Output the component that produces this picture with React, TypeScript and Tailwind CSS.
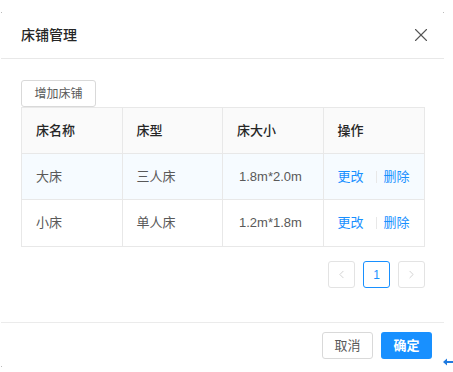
import { ChevronLeft, ChevronRight, X } from "lucide-react";

const rows = [
  { name: "大床", type: "三人床", size: "1.8m*2.0m", highlight: true },
  { name: "小床", type: "单人床", size: "1.2m*1.8m", highlight: false },
];

const cell = "w-[101px] pl-[14px] border-r border-[#e8e8e8] last:border-r-0 flex items-center";

export default function App() {
  return (
    <div className="relative h-[372px] w-[453px] bg-white font-['Liberation_Sans','Noto_Sans_CJK_SC',sans-serif] text-[13px] text-[#595959]">
      <div className="absolute left-[1px] top-[12px] h-px w-px bg-[#bbb]" />
      <div className="absolute left-[443px] top-[12px] h-px w-px bg-[#bbb]" />
      <div className="absolute left-[1px] top-[366px] h-px w-px bg-[#bbb]" />

      <div className="ml-[1px] w-[443px] pt-[12px]">
        <div className="flex h-[47px] items-center justify-between border-b border-[#e8e8e8] pl-[20px] pr-[12px]">
          <span className="text-[14px] font-medium text-[#262626]">床铺管理</span>
          <X className="size-[22px] text-[#555]" strokeWidth={1.2} />
        </div>

        <div className="pl-[20px] pr-[19px] pt-[21px] pb-[34px]">
          <button className="h-[27px] w-[75px] rounded-[3px] border border-[#d9d9d9] bg-white text-[12px] text-[#595959]">
            增加床铺
          </button>
          <div className="w-[404px] border border-[#e8e8e8]">
            <div className="flex h-[46px] border-b border-[#e8e8e8] bg-[#fafafa] font-medium text-[#262626]">
              <div className={cell}>床名称</div>
              <div className={cell}>床型</div>
              <div className={cell}>床大小</div>
              <div className={cell}>操作</div>
            </div>
            {rows.map((r) => (
              <div
                key={r.name}
                className={`flex h-[46px] border-b border-[#e8e8e8] last:border-b-0 ${r.highlight ? "bg-[#f6fbff]" : "bg-white"}`}
              >
                <div className={cell}>{r.name}</div>
                <div className={cell}>{r.type}</div>
                <div className={`${cell} pl-[16px]`}>{r.size}</div>
                <div className={`${cell} text-[#1890ff]`}>
                  <span>更改</span>
                  <span className="ml-[12px] mr-[7px] h-[12px] w-px bg-[#e8e8e8]" />
                  <span>删除</span>
                </div>
              </div>
            ))}
          </div>

          <div className="mt-[14px] flex justify-end gap-[8px]">
            <div className="flex size-[27px] items-center justify-center rounded-[3px] border border-[#e3e3e3] text-[#c8c8c8]">
              <ChevronLeft className="size-[13px]" strokeWidth={1.5} />
            </div>
            <div className="flex size-[27px] items-center justify-center rounded-[3px] border border-[#1890ff] text-[12px] text-[#1890ff]">
              1
            </div>
            <div className="flex size-[27px] items-center justify-center rounded-[3px] border border-[#e3e3e3] text-[#c8c8c8]">
              <ChevronRight className="size-[13px]" strokeWidth={1.5} />
            </div>
          </div>
        </div>

        <div className="flex justify-end gap-[8px] border-t border-[#ebebeb] pr-[12px] pt-[9px]">
          <button className="h-[27px] w-[51px] rounded-[3px] border border-[#d9d9d9] bg-white text-[13px] text-[#595959]">
            取消
          </button>
          <button className="h-[27px] w-[51px] rounded-[3px] bg-[#1890ff] text-[13px] font-semibold text-white">
            确定
          </button>
        </div>
      </div>

      <svg className="absolute left-[443px] top-[358px]" width="10" height="8" viewBox="0 0 10 8">
        <path d="M0 4 L4 0.5 L4 3 L10 3 L10 5 L4 5 L4 7.5 Z" fill="#1f7ae0" />
      </svg>
    </div>
  );
}
